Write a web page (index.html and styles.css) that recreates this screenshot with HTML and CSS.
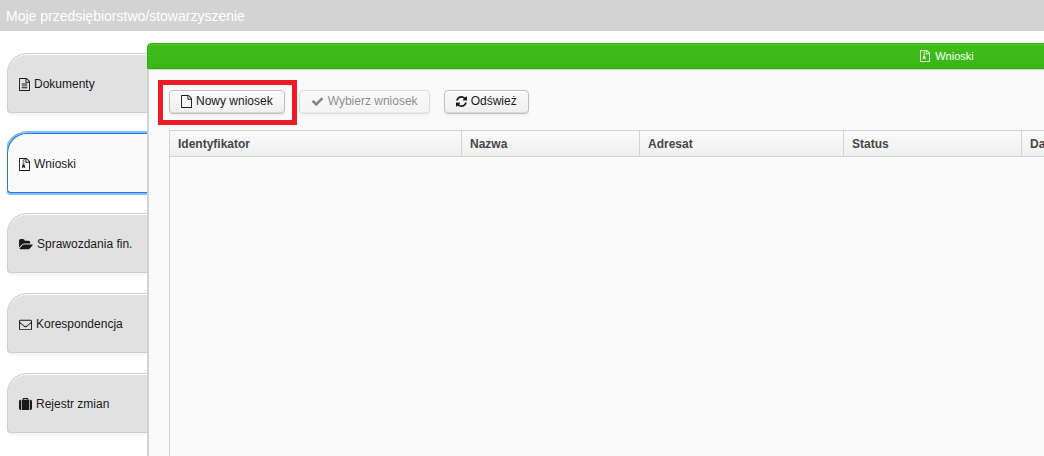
FILE: index.html
```html
<!DOCTYPE html>
<html lang="pl">
<head>
<meta charset="utf-8">
<title>Moje przedsiębiorstwo/stowarzyszenie</title>
<link rel="stylesheet" href="styles.css">
</head>
<body>
<svg class="sprite" aria-hidden="true">
  <symbol id="file" viewBox="128 0 1536 1792"><path d="M1596 380q28 28 48 76t20 88v1152q0 40-28 68t-68 28h-1344q-40 0-68-28t-28-68v-1600q0-40 28-68t68-28h896q40 0 88 20t76 48zm-444-244v376h376q-10-29-22-41l-313-313q-12-12-41-22zm384 1528v-1024h-416q-40 0-68-28t-28-68v-416h-768v1536h1280z"/></symbol>
  <symbol id="file-text" viewBox="128 0 1536 1792"><path d="M1596 380q28 28 48 76t20 88v1152q0 40-28 68t-68 28h-1344q-40 0-68-28t-28-68v-1600q0-40 28-68t68-28h896q40 0 88 20t76 48zm-444-244v376h376q-10-29-22-41l-313-313q-12-12-41-22zm384 1528v-1024h-416q-40 0-68-28t-28-68v-416h-768v1536h1280zM512 768h768v128h-768zM512 1024h768v128h-768zM512 1280h768v128h-768z"/></symbol>
  <symbol id="archive" viewBox="128 0 1536 1792"><path d="M1596 380q28 28 48 76t20 88v1152q0 40-28 68t-68 28h-1344q-40 0-68-28t-28-68v-1600q0-40 28-68t68-28h896q40 0 88 20t76 48zm-444-244v376h376q-10-29-22-41l-313-313q-12-12-41-22zm384 1528v-1024h-416q-40 0-68-28t-28-68v-416h-128v128h-128v-128h-512v1536h1280zM640 256h128v128h-128zM768 384h128v128h-128zM640 512h128v128h-128zM768 640h128v128h-128zM640 768h128v128h128l107 349q21 67-48 119t-187 52-187-52-48-119l107-349zM768 1408q53 0 90-19t37-45-37-45-90-19-90 19-37 45 37 45 90 19z"/></symbol>
  <symbol id="folder" viewBox="0 0 1920 1792"><path d="M1879 952q0 31-31 66l-336 396q-43 51-120.5 86.5t-143.5 35.5h-1088q-34 0-60.5-13t-26.5-43q0-31 31-66l336-396q43-51 120.5-86.5t143.5-35.5h1088q34 0 60.5 13t26.5 43zm-343-344v160h-832q-94 0-197 47.5t-164 119.5l-337 396-5 6q0-4-.5-12.5t-.5-12.5v-960q0-92 66-158t158-66h320q92 0 158 66t66 158v32h544q92 0 158 66t66 158z"/></symbol>
  <symbol id="envelope" viewBox="0 0 1792 1792"><path fill-rule="evenodd" d="M160 256h1472q66 0 113 47t47 113v1088q0 66-47 113t-113 47h-1472q-66 0-113-47t-47-113v-1088q0-66 47-113t113-47zM128 736v768q0 32 32 32h1472q32 0 32-32v-768q-32 36-69 66-268 206-426 338-51 43-83 67t-86.500 48.500-102.500 24.500h-2q-48 0-102.500-24.500t-86.500-48.500-83-67q-158-132-426-338-37-30-69-66zM128 416q0 168 147 284 193 152 401 317 6 5 35 29.500t46 37.500 44.500 31.500 50.500 27.500 43 9h2q20 0 43-9t50.500-27.500 44.500-31.500 46-37.500 35-29.500q208-165 401-317 54-43 100.500-115.500t46.500-131.500q0-69-32-69h-1472q-32 0-32 32z"/></symbol>
  <symbol id="suitcase" viewBox="0 0 1792 1792"><path d="M640 256h512v-128h-512v128zm-352 0v1408h-64q-92 0-158-66t-66-158v-960q0-92 66-158t158-66h64zm1120 0v1408h-1024v-1408h128v-160q0-40 28-68t68-28h576q40 0 68 28t28 68v160h128zm384 224v960q0 92-66 158t-158 66h-64v-1408h64q92 0 158 66t66 158z"/></symbol>
  <symbol id="check" viewBox="0 0 1792 1792"><path d="M1671 566q0 40-28 68l-724 724-136 136q-28 28-68 28t-68-28l-136-136-362-362q-28-28-28-68t28-68l136-136q28-28 68-28t68 28l294 295 656-657q28-28 68-28t68 28l136 136q28 28 28 68z"/></symbol>
  <symbol id="refresh" viewBox="128 0 1536 1792"><path d="M1639 1056q0 5-1 7-64 268-268 434.5t-478 166.5q-146 0-282.500-55t-243.500-157l-129 129q-19 19-45 19t-45-19-19-45v-448q0-26 19-45t45-19h448q26 0 45 19t19 45-19 45l-137 137q71 66 161 102t187 36q134 0 250-65t186-179q11-17 53-117 8-23 30-23h192q13 0 22.500 9.500t9.500 22.500zm25-800v448q0 26-19 45t-45 19h-448q-26 0-45-19t-19-45 19-45l138-138q-148-137-349-137-134 0-250 65t-186 179q-11 17-53 117-8 23-30 23h-199q-13 0-22.500-9.500t-9.500-22.500v-7q65-268 270-434.500t480-166.500q146 0 284 55.500t245 156.500l130-129q19-19 45-19t45 19 19 45z"/></symbol>
</svg>
<header class="page-header">Moje przedsiębiorstwo/stowarzyszenie</header>
<div class="layout">
  <nav class="tabs">
    <button class="tab" type="button"><svg class="icon narrow"><use href="#file-text"/></svg>Dokumenty</button>
    <button class="tab active" type="button" aria-current="page"><svg class="icon narrow"><use href="#archive"/></svg>Wnioski</button>
    <button class="tab" type="button"><svg class="icon wide"><use href="#folder"/></svg>Sprawozdania fin.</button>
    <button class="tab" type="button"><svg class="icon"><use href="#envelope"/></svg>Korespondencja</button>
    <button class="tab" type="button"><svg class="icon"><use href="#suitcase"/></svg>Rejestr zmian</button>
  </nav>
  <main class="panel">
    <h1 class="panel-title"><svg class="icon title-icon"><use href="#archive"/></svg>Wnioski</h1>
    <div class="panel-body">
      <div class="toolbar">
        <span class="highlight"><button class="button" type="button"><svg class="icon narrow"><use href="#file"/></svg>Nowy wniosek</button></span>
        <button class="button" type="button" disabled><svg class="icon"><use href="#check"/></svg>Wybierz wniosek</button>
        <button class="button" type="button"><svg class="icon narrow"><use href="#refresh"/></svg>Odśwież</button>
      </div>
      <div class="grid">
        <table class="grid-table">
          <colgroup><col class="col-id"><col class="col-name"><col class="col-addressee"><col class="col-status"><col></colgroup>
          <thead><tr><th scope="col">Identyfikator</th><th scope="col">Nazwa</th><th scope="col">Adresat</th><th scope="col">Status</th><th scope="col">Data</th></tr></thead>
        </table>
      </div>
    </div>
  </main>
</div>
</body>
</html>
```
FILE: styles.css
```css
* { box-sizing: border-box; }

body {
  display: flex;
  flex-direction: column;
  height: 100vh;
  margin: 0;
  overflow: hidden;
  background: #fff;
  color: #191919;
  font: 12px/16px "Liberation Sans", Arial, sans-serif;
}

.sprite { display: none; }

.page-header {
  flex: none;
  padding: 7px 6px 5px;
  background: #d3d3d3;
  color: #fff;
  font-size: 14px;
  line-height: 19px;
}

.layout {
  display: flex;
  flex: 1;
  min-height: 0;
  padding: 12px 0 0 7px;
}

.tabs {
  display: flex;
  flex: none;
  flex-direction: column;
  gap: 20px;
  width: 140px;
  padding-top: 10px;
}

.tab {
  display: flex;
  flex: none;
  align-items: center;
  gap: 4px;
  height: 60px;
  padding: 2px 11px 0;
  border: 1px solid #cdcdcd;
  border-right: 0;
  border-radius: 20px 0 0 4px;
  background: #e1e1e1;
  box-shadow: inset 0 1px 0 #fff, 0 2px 3px rgba(0, 0, 0, 0.05);
  color: inherit;
  font: inherit;
}

.tab.active {
  border-color: #197de1;
  background: #fafafa;
  box-shadow: 0 0 0 2px #8bbdf0;
  clip-path: inset(-3px 0 -3px 0);
}

.icon {
  flex: none;
  width: 13px;
  height: 13px;
  fill: currentColor;
}

.icon.narrow { width: 11px; }
.icon.wide { width: 14px; }

.panel {
  display: flex;
  flex: 1 0 1600px;
  flex-direction: column;
}

.panel-title {
  display: flex;
  flex: none;
  align-items: center;
  justify-content: center;
  gap: 5px;
  height: 26px;
  margin: 0;
  border: 1px solid #36a717;
  border-radius: 4px 4px 0 0;
  background: linear-gradient(#40bd1b, #3ab717);
  box-shadow: inset 0 1px 0 #56cb34;
  color: #fff;
  font-size: 11px;
  font-weight: normal;
}

.title-icon {
  width: 10px;
  height: 12px;
}

.panel-body {
  display: flex;
  flex: 1;
  flex-direction: column;
  gap: 16px;
  padding: 20px 20px 0;
  border: solid #d3d3d3;
  border-width: 1px 2px 0;
  background: #fafafa;
}

.toolbar {
  display: flex;
  gap: 14px;
}

.highlight {
  position: relative;
  display: flex;
}

.highlight::after {
  content: "";
  position: absolute;
  inset: -10px -12px -11px -11px;
  border: 5px solid #ed1c24;
  pointer-events: none;
}

.button {
  display: flex;
  align-items: center;
  gap: 4px;
  height: 24px;
  padding: 0 11px 2px;
  border: 1px solid #c0c0c0;
  border-radius: 4px;
  background: linear-gradient(#fafafa, #efefef);
  box-shadow: inset 0 1px 0 #fff, inset 0 -1px 0 #d9d9d9, 0 2px 3px rgba(0, 0, 0, 0.05);
  color: inherit;
  font: inherit;
}

.button:disabled {
  color: #191919;
  opacity: 0.5;
}

.grid {
  flex: 1;
  border: 1px solid #d3d3d3;
  border-bottom: 0;
}

.grid-table {
  width: 100%;
  border-collapse: separate;
  border-spacing: 0;
  table-layout: fixed;
}

.col-id { width: 292px; }
.col-name { width: 178px; }
.col-addressee { width: 204px; }
.col-status { width: 178px; }

.grid-table th {
  height: 26px;
  padding: 0 8px;
  border: solid #d3d3d3;
  border-width: 0 1px 1px 0;
  background: linear-gradient(#fafafa, #efefef);
  color: #464646;
  font-weight: bold;
  text-align: left;
}
```
